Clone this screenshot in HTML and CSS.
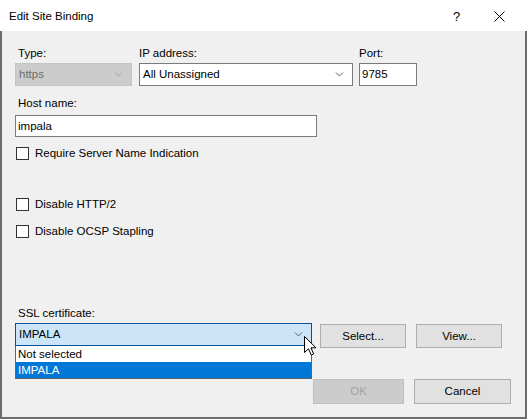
FILE: index.html
```html
<!DOCTYPE html>
<html>
<head>
<meta charset="utf-8">
<link rel="stylesheet" href="styles.css">
</head>
<body>
<div class="window">
  <div class="titlebar">
    <span class="title">Edit Site Binding</span>
    <span class="help">?</span>
    <svg class="close" width="11" height="11" viewBox="0 0 11 11"><path d="M0.5 0.5 L10.5 10.5 M10.5 0.5 L0.5 10.5" stroke="#000" stroke-width="1" fill="none"/></svg>
  </div>
  <div class="body">
    <div class="row1">
      <div class="field f-type">
        <div class="label ind">Type:</div>
        <div class="combo disabled"><span>https</span>
          <svg class="chev" width="9" height="5" viewBox="0 0 9 5"><path d="M1 0.5 L4.5 4 L8 0.5" stroke="#a2a2a2" fill="none"/></svg>
        </div>
      </div>
      <div class="field f-ip">
        <div class="label">IP address:</div>
        <div class="combo"><span>All Unassigned</span>
          <svg class="chev" width="9" height="5" viewBox="0 0 9 5"><path d="M1 0.5 L4.5 4 L8 0.5" stroke="#606060" fill="none"/></svg>
        </div>
      </div>
      <div class="field f-port">
        <div class="label">Port:</div>
        <div class="textbox small">9785</div>
      </div>
    </div>
    <div class="label ind host-label">Host name:</div>
    <div class="textbox host">impala</div>
    <div class="check c1"><span class="box"></span><span>Require Server Name Indication</span></div>
    <div class="check c2"><span class="box"></span><span>Disable HTTP/2</span></div>
    <div class="check c3"><span class="box"></span><span>Disable OCSP Stapling</span></div>
    <div class="label ind ssl-label">SSL certificate:</div>
    <div class="ssl-row">
      <div class="combo ssl"><span>IMPALA</span>
        <svg class="chev" width="9" height="5" viewBox="0 0 9 5"><path d="M1 0.5 L4.5 4 L8 0.5" stroke="#606060" fill="none"/></svg>
        <div class="droplist">
          <div class="opt">Not selected</div>
          <div class="opt sel">IMPALA</div>
        </div>
      </div>
      <div class="btn b-select">Select...</div>
      <div class="btn b-view">View...</div>
    </div>
    <div class="footer">
      <div class="btn b-ok off">OK</div>
      <div class="btn b-cancel">Cancel</div>
    </div>
    <svg class="cursor" width="13" height="20" viewBox="0 0 13 20"><path d="M0.5 0.5 V16.5 L4.5 12.8 L7.2 19 L9.6 18 L7 11.8 H12 Z" fill="#fff" stroke="#000" stroke-width="1" stroke-linejoin="miter"/></svg>
  </div>
</div>
</body>
</html>
```
FILE: styles.css
```css
html, body {
  margin: 0;
  padding: 0;
}
body {
  font-family: "Liberation Sans", Arial, sans-serif;
  font-size: 11.5px;
  color: #000;
  background: #f0f0f0;
}
.window {
  width: 527px;
  height: 419px;
  display: flex;
  flex-direction: column;
  overflow: hidden;
}
.titlebar {
  height: 31px;
  flex: none;
  background: #fff;
  display: flex;
  align-items: center;
  position: relative;
}
.title {
  margin-left: 9px;
  font-size: 11.5px;
  line-height: 31px;
  padding-top: 1px;
}
.help {
  position: absolute;
  left: 453px;
  top: 9px;
  font-size: 13px;
  line-height: 15px;
}
.close {
  position: absolute;
  left: 494px;
  top: 11px;
}
.body {
  flex: 1;
  position: relative;
  background: #f0f0f0;
  border-left: 2px solid #6c6c6c;
  border-right: 2px solid #6c6c6c;
  border-bottom: 2px solid #6c6c6c;
  padding: 15px 14px 0 13px;
  display: flex;
  flex-direction: column;
  align-items: flex-start;
}
.label {
  line-height: 15px;
  height: 15px;
  white-space: nowrap;
}
.ind {
  padding-left: 3px;
}
.row1 {
  display: flex;
  gap: 0;
}
.field {
  display: flex;
  flex-direction: column;
}
.field .label {
  margin-bottom: 2px;
}
.f-type { width: 117px; margin-right: 7px; }
.f-ip { width: 214px; margin-right: 6px; }
.f-port { width: 58px; }
.combo {
  position: relative;
  box-sizing: border-box;
  height: 23px;
  border: 1px solid #7a7a7a;
  background: #fff;
  padding-left: 3px;
  line-height: 21px;
  white-space: nowrap;
}
.combo .chev {
  position: absolute;
  right: 8px;
  top: 8px;
}
.combo.disabled {
  background: #cccccc;
  border-color: #c4c4c4;
  color: #6d6d6d;
}
.textbox {
  box-sizing: border-box;
  height: 22px;
  border: 1px solid #7a7a7a;
  background: #fff;
  padding-left: 2px;
  line-height: 20px;
}
.textbox.small {
  height: 23px;
  line-height: 21px;
}
.host-label {
  margin-top: 10px;
}
.host {
  margin-top: 4px;
  width: 302px;
}
.check {
  display: flex;
  align-items: center;
  height: 15px;
  line-height: 15px;
  padding-left: 1px;
}
.check .box {
  box-sizing: border-box;
  width: 13px;
  height: 13px;
  border: 1px solid #333;
  background: #fff;
  margin-right: 6px;
}
.c1 { margin-top: 9px; }
.c2 { margin-top: 36px; }
.c3 { margin-top: 12px; }
.ssl-label {
  margin-top: 67px;
}
.ssl-row {
  display: flex;
  align-items: flex-start;
  margin-top: 2px;
}
.combo.ssl {
  width: 297px;
  background: #cce4f7;
  border-color: #005499;
}
.droplist {
  position: absolute;
  left: -1px;
  top: 22px;
  width: 297px;
  box-sizing: border-box;
  border: 1px solid #646464;
  border-top: none;
  background: #fff;
  z-index: 2;
}
.opt {
  height: 16px;
  line-height: 16px;
  padding-left: 2px;
}
.opt.sel {
  background: #0078d7;
  color: #fff;
}
.btn {
  box-sizing: border-box;
  border: 1px solid #adadad;
  background: #e1e1e1;
  text-align: center;
}
.b-select, .b-view {
  height: 24px;
  line-height: 22px;
  width: 86px;
  margin-top: 1px;
}
.b-select { margin-left: 8px; }
.b-view { margin-left: 10px; }
.footer {
  align-self: stretch;
  display: flex;
  justify-content: flex-end;
  gap: 10px;
  margin-top: 31px;
}
.b-ok, .b-cancel {
  height: 25px;
  line-height: 23px;
}
.b-ok { width: 91px; }
.b-cancel { width: 97px; }
.btn.off {
  background: #cccccc;
  border-color: #bfbfbf;
  color: #a3a3a3;
}
.cursor {
  position: absolute;
  left: 302px;
  top: 305px;
  z-index: 5;
}
```
